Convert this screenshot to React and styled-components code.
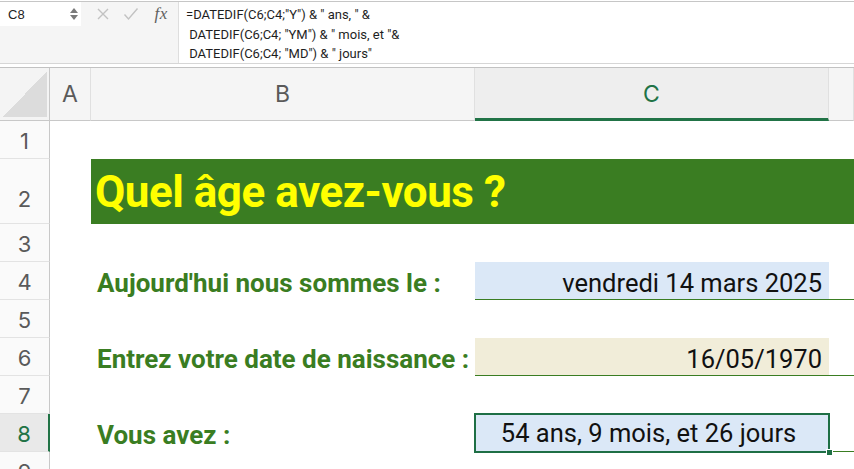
import React from "react"
import styled, { createGlobalStyle } from "styled-components"

const GlobalStyle = createGlobalStyle`
  body {
    margin: 0;
    background: #fff;
    overflow: hidden;
  }
`

const Sheet = styled.div`
  width: 854px;
  height: 469px;
  overflow: hidden;
  font-family: Roboto, "Liberation Sans", sans-serif;
`

const FormulaBar = styled.div`
  display: flex;
  height: 61px;
  margin-top: 1px;
  border-top: 1px solid #c6c6c6;
  border-bottom: 1px solid #d6d6d6;
  background: #f5f5f5;
`

const LeftPane = styled.div`
  width: 178px;
  display: flex;
  flex-direction: column;
`

const NameRow = styled.div`
  height: 24px;
  display: flex;
  align-items: center;
`

const NameBox = styled.div`
  width: 82px;
  height: 100%;
  box-sizing: border-box;
  background: #fff;
  display: flex;
  align-items: center;
  justify-content: space-between;
  padding: 0 2px 0 8px;
  font: 13px "Liberation Sans", Arial, sans-serif;
  color: #222;
`

const IconSlot = styled.div`
  width: ${(p) => p.$w || 28}px;
  display: flex;
  justify-content: center;
  align-items: center;
`

const Fx = styled.span`
  font: italic 17px "Liberation Serif", serif;
  color: #5f5f5f;
  letter-spacing: 0.5px;
`

const FormulaInput = styled.div`
  flex: 1;
  background: #fff;
  border-left: 1px solid #dedede;
  padding: 3px 0 0 7px;
  font: 13px Roboto, "Liberation Sans", sans-serif;
  line-height: 19.5px;
  color: #1e1e1e;
  white-space: pre;
`

const Grid = styled.div`
  display: grid;
  grid-template-columns: 50px 41px 384px 354px 1fr;
  grid-template-rows: 53px 38px 65px repeat(7, 38px);
  margin-top: 3px;
  border-top: 1px solid #c2c2c2;
`

const Corner = styled.div`
  background: #f4f4f4;
  border-right: 1px solid #c8c8c8;
  border-bottom: 1px solid #c8c8c8;
  padding: 3px 2px 3px 3px;
  div {
    width: 100%;
    height: 100%;
    background: linear-gradient(to bottom right, transparent 50%, #dcdcdc 50%);
  }
`

const ColHeader = styled.div`
  background: ${(p) => (p.$active ? "#eeeeee" : "#f5f5f5")};
  border-right: 1px solid #e0e0e0;
  border-bottom: ${(p) => (p.$active ? "3px solid #217346" : "1px solid #c8c8c8")};
  display: flex;
  align-items: center;
  justify-content: center;
  padding-top: ${(p) => (p.$active ? 2 : 0)}px;
  font: 23px Inter, sans-serif;
  color: ${(p) => (p.$active ? "#217346" : "#5a5a5a")};
`

const RowHeader = styled.div`
  background: ${(p) => (p.$active ? "#e9e9e9" : "#fafafa")};
  border-right: ${(p) => (p.$active ? "2px solid #217346" : "1px solid #c8c8c8")};
  border-bottom: 1px solid #e3e3e3;
  display: flex;
  justify-content: center;
  align-items: flex-end;
  padding-bottom: ${(p) => p.$pad || 6}px;
  font: 22px Inter, sans-serif;
  line-height: 1;
  color: ${(p) => (p.$active ? "#217346" : "#5a5a5a")};
`

const Blank = styled.div`
  border-bottom: ${(p) => (p.$line ? "1px solid #3a7d22" : "none")};
`

const Title = styled.div`
  grid-column: 3 / -1;
  background: #3a7d22;
  color: #ffff00;
  display: flex;
  align-items: flex-end;
  padding: 0 0 10px 4px;
  font: 700 44px Roboto, sans-serif;
  letter-spacing: -0.5px;
  line-height: 1;
  white-space: nowrap;
`

const Label = styled.div`
  display: flex;
  align-items: flex-end;
  padding: 0 0 4px 6px;
  font: 700 26px Roboto, sans-serif;
  line-height: 1;
  color: #3a7d22;
  white-space: nowrap;
`

const Value = styled.div`
  position: relative;
  background: ${(p) => p.$bg};
  border-bottom: ${(p) => (p.$selected ? "none" : "1px solid #3a7d22")};
  outline: ${(p) => (p.$selected ? "2px solid #1e6f45" : "none")};
  outline-offset: -1px;
  display: flex;
  align-items: flex-end;
  justify-content: ${(p) => (p.$selected ? "center" : "flex-end")};
  padding: 0 7px ${(p) => (p.$selected ? 6 : 3)}px 0;
  font: 25.5px Roboto, sans-serif;
  line-height: 1;
  color: #111;
  white-space: nowrap;
`

const Handle = styled.span`
  position: absolute;
  right: -4px;
  bottom: -4px;
  width: 5px;
  height: 5px;
  background: #1e6f45;
  border: 1px solid #fff;
`

const Spinner = () => (
  <svg width="10" height="16" viewBox="0 0 10 16">
    <path d="M5 2 L9 7 L1 7 Z" fill="#7a7a7a" />
    <path d="M5 14 L9 9 L1 9 Z" fill="#7a7a7a" />
  </svg>
)

const Cross = () => (
  <svg width="14" height="14" viewBox="0 0 14 14">
    <path d="M2 2 L12 12 M12 2 L2 12" stroke="#c2c2c2" strokeWidth="1.4" />
  </svg>
)

const Check = () => (
  <svg width="16" height="14" viewBox="0 0 16 14">
    <path d="M1.5 7.5 L5.5 12 L14.5 1.5" stroke="#c2c2c2" strokeWidth="1.4" fill="none" />
  </svg>
)

const formula = `=DATEDIF(C6;C4;"Y") & " ans, " &
 DATEDIF(C6;C4; "YM") & " mois, et "&
 DATEDIF(C6;C4; "MD") & " jours"`

const App = () => {
  return (
    <Sheet>
      <GlobalStyle />
      <FormulaBar>
        <LeftPane>
          <NameRow>
            <NameBox>
              C8
              <Spinner />
            </NameBox>
            <IconSlot $w={8} />
            <IconSlot>
              <Cross />
            </IconSlot>
            <IconSlot>
              <Check />
            </IconSlot>
            <IconSlot $w={34}>
              <Fx>fx</Fx>
            </IconSlot>
          </NameRow>
        </LeftPane>
        <FormulaInput>{formula}</FormulaInput>
      </FormulaBar>

      <Grid>
        <Corner>
          <div />
        </Corner>
        <ColHeader>A</ColHeader>
        <ColHeader>B</ColHeader>
        <ColHeader $active>C</ColHeader>
        <ColHeader />

        <RowHeader>1</RowHeader>
        <Blank />
        <Blank />
        <Blank />
        <Blank />

        <RowHeader $pad={13}>2</RowHeader>
        <Blank />
        <Title>Quel âge avez-vous ?</Title>

        <RowHeader>3</RowHeader>
        <Blank />
        <Blank />
        <Blank />
        <Blank />

        <RowHeader>4</RowHeader>
        <Blank />
        <Label>Aujourd'hui nous sommes le :</Label>
        <Value $bg="#dbe8f7">vendredi 14 mars 2025</Value>
        <Blank $line />

        <RowHeader>5</RowHeader>
        <Blank />
        <Blank />
        <Blank />
        <Blank />

        <RowHeader>6</RowHeader>
        <Blank />
        <Label>Entrez votre date de naissance :</Label>
        <Value $bg="#f1edd9">16/05/1970</Value>
        <Blank $line />

        <RowHeader>7</RowHeader>
        <Blank />
        <Blank />
        <Blank />
        <Blank />

        <RowHeader $active>8</RowHeader>
        <Blank />
        <Label>Vous avez :</Label>
        <Value $bg="#dbe8f7" $selected>
          54 ans, 9 mois, et 26 jours
          <Handle />
        </Value>
        <Blank $line />

        <RowHeader>9</RowHeader>
        <Blank />
        <Blank />
        <Blank />
        <Blank />
      </Grid>
    </Sheet>
  )
}

export default App
